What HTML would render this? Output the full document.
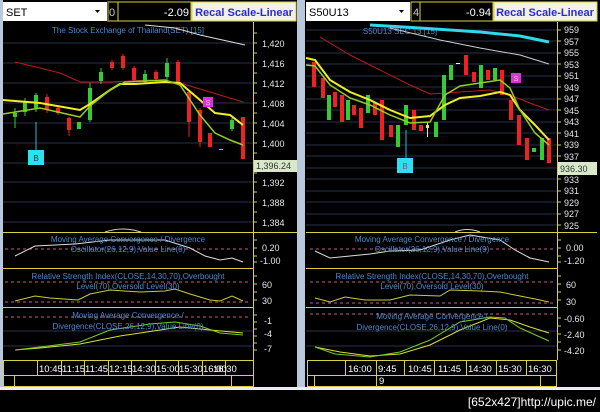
<!DOCTYPE html>
<html><head><meta charset="utf-8"><style>
html,body{margin:0;padding:0;background:#000;width:600px;height:412px;overflow:hidden}
svg{display:block}
text{font-family:"Liberation Sans",sans-serif}
</style></head><body>
<svg width="600" height="412" viewBox="0 0 600 412" xmlns="http://www.w3.org/2000/svg">
<rect width="600" height="412" fill="#000"/>
<rect x="297" y="0" width="8" height="390" fill="#b9c9dd"/>
<rect x="0" y="0" width="3" height="390" fill="#b9c9dd"/>
<rect x="0" y="387" width="600" height="3" fill="#e8eef4"/>

<g>
<rect x="3" y="2" width="104" height="19" fill="#fff"/>
<text x="6" y="16" font-size="11" fill="#000">SET</text>
<path d="M95 10 l5 0 l-2.5 3z" fill="#000"/>
<rect x="108" y="2" width="10" height="19" fill="#000" stroke="#d8d040"/>
<text x="109" y="16" font-size="11" fill="#ccc">0</text>
<rect x="118" y="2" width="73" height="19" fill="#000" stroke="#d8d040"/>
<text x="189" y="16" font-size="11" fill="#fff" text-anchor="end">-2.09</text>
<rect x="192" y="2" width="104" height="19" fill="#f2f2ea" stroke="#d8d040"/>
<text x="244" y="16" font-size="11" fill="#2a2ad0" font-weight="bold" text-anchor="middle">Recal Scale-Linear</text>

<g stroke="#2a2f4a" stroke-width="1">
<line x1="3" y1="43" x2="253" y2="43"/><line x1="3" y1="63" x2="253" y2="63"/><line x1="3" y1="83" x2="253" y2="83"/><line x1="3" y1="103" x2="253" y2="103"/><line x1="3" y1="123" x2="253" y2="123"/><line x1="3" y1="143" x2="253" y2="143"/><line x1="3" y1="163" x2="253" y2="163"/><line x1="3" y1="182" x2="253" y2="182"/><line x1="3" y1="202" x2="253" y2="202"/><line x1="3" y1="222" x2="253" y2="222"/>
</g>
<line x1="253.5" y1="22" x2="253.5" y2="360" stroke="#d8d040"/>
<g stroke="#d8d040">
<line x1="253" y1="33" x2="257" y2="33"/><line x1="253" y1="43" x2="257" y2="43"/><line x1="253" y1="53" x2="257" y2="53"/><line x1="253" y1="63" x2="257" y2="63"/><line x1="253" y1="73" x2="257" y2="73"/><line x1="253" y1="83" x2="257" y2="83"/><line x1="253" y1="93" x2="257" y2="93"/><line x1="253" y1="103" x2="257" y2="103"/><line x1="253" y1="113" x2="257" y2="113"/><line x1="253" y1="123" x2="257" y2="123"/><line x1="253" y1="133" x2="257" y2="133"/><line x1="253" y1="143" x2="257" y2="143"/><line x1="253" y1="153" x2="257" y2="153"/><line x1="253" y1="173" x2="257" y2="173"/><line x1="253" y1="182" x2="257" y2="182"/><line x1="253" y1="192" x2="257" y2="192"/><line x1="253" y1="202" x2="257" y2="202"/><line x1="253" y1="212" x2="257" y2="212"/><line x1="253" y1="222" x2="257" y2="222"/>
<line x1="253" y1="240" x2="257" y2="240"/><line x1="253" y1="248" x2="257" y2="248"/><line x1="253" y1="256" x2="257" y2="256"/><line x1="253" y1="262" x2="257" y2="262"/>
<line x1="253" y1="276" x2="257" y2="276"/><line x1="253" y1="284" x2="257" y2="284"/><line x1="253" y1="292" x2="257" y2="292"/><line x1="253" y1="300" x2="257" y2="300"/>
<line x1="253" y1="315" x2="257" y2="315"/><line x1="253" y1="322" x2="257" y2="322"/><line x1="253" y1="329" x2="257" y2="329"/><line x1="253" y1="336" x2="257" y2="336"/><line x1="253" y1="343" x2="257" y2="343"/><line x1="253" y1="350" x2="257" y2="350"/>
</g>
<g font-size="9" fill="#e6e6e6">
<text x="262" y="47">1,420</text><text x="262" y="67">1,416</text><text x="262" y="87">1,412</text><text x="262" y="107">1,408</text><text x="262" y="127">1,404</text><text x="262" y="147">1,400</text><text x="262" y="186">1,392</text><text x="262" y="206">1,388</text><text x="262" y="226">1,384</text>
</g>
<rect x="254" y="160" width="43" height="12" fill="#d8e8c8"/>
<text x="256" y="169" font-size="9" fill="#333">1,396.24</text>

<text x="128" y="33" font-size="8" fill="#4a8ad0" text-anchor="middle">The Stock Exchange of Thailand(SET) [15]</text>
<polyline points="145,25 175,28 200,35 245,45" fill="none" stroke="#ddd"/>
<polyline points="15,62 40,68 60,73 80,82 110,82 150,80 180,83 210,92 243,102" fill="none" stroke="#c01818"/>
<g stroke-width="1">
<line x1="15" y1="108" x2="15" y2="128" stroke="#3c3"/><rect x="13" y="113" width="4" height="4" fill="#3c3"/>
<line x1="25" y1="98" x2="25" y2="116" stroke="#3c3"/><rect x="23" y="102" width="4" height="10" fill="#3c3"/>
<line x1="36" y1="93" x2="36" y2="112" stroke="#3c3"/><rect x="34" y="95" width="4" height="13" fill="#3c3"/>
<line x1="47" y1="94" x2="47" y2="113" stroke="#e22"/><rect x="45" y="97" width="4" height="13" fill="#e22"/>
<line x1="58" y1="105" x2="58" y2="115" stroke="#e22"/><rect x="56" y="108" width="4" height="5" fill="#e22"/>
<line x1="69" y1="117" x2="69" y2="136" stroke="#e22"/><rect x="67" y="118" width="4" height="12" fill="#e22"/>
<rect x="77" y="122" width="4" height="7" fill="#3c3"/>
<line x1="90" y1="83" x2="90" y2="122" stroke="#3c3"/><rect x="88" y="88" width="4" height="32" fill="#3c3"/>
<line x1="101" y1="68" x2="101" y2="84" stroke="#3c3"/><rect x="99" y="72" width="4" height="9" fill="#3c3"/>
<line x1="112" y1="60" x2="112" y2="70" stroke="#e22"/><rect x="110" y="62" width="4" height="6" fill="#e22"/>
<line x1="123" y1="54" x2="123" y2="70" stroke="#e22"/><rect x="121" y="56" width="4" height="12" fill="#e22"/>
<line x1="134" y1="66" x2="134" y2="82" stroke="#e22"/><rect x="132" y="68" width="4" height="12" fill="#e22"/>
<line x1="145" y1="70" x2="145" y2="84" stroke="#3c3"/><rect x="143" y="74" width="4" height="8" fill="#3c3"/>
<line x1="156" y1="70" x2="156" y2="82" stroke="#e22"/><rect x="154" y="72" width="4" height="7" fill="#e22"/>
<line x1="167" y1="58" x2="167" y2="80" stroke="#3c3"/><rect x="165" y="63" width="4" height="14" fill="#3c3"/>
<line x1="178" y1="60" x2="178" y2="84" stroke="#e22"/><rect x="176" y="62" width="4" height="20" fill="#e22"/>
<line x1="189" y1="90" x2="189" y2="137" stroke="#e22"/><rect x="187" y="92" width="4" height="30" fill="#e22"/>
<line x1="200" y1="108" x2="200" y2="147" stroke="#e22"/><rect x="198" y="110" width="4" height="32" fill="#e22"/>
<rect x="208" y="133" width="4" height="14" fill="#e22"/>
<rect x="219" y="149" width="4" height="1" fill="#fa0"/>
<line x1="232" y1="118" x2="232" y2="131" stroke="#3c3"/><rect x="230" y="120" width="4" height="9" fill="#3c3"/>
<rect x="241" y="117" width="4" height="42" fill="#e22"/>
</g>
<polyline points="3,100 40,103 80,110 90,104 110,90 120,84 135,84 165,82 180,83 200,100 215,113 230,115 243,125" fill="none" stroke="#f0f020" stroke-width="2"/>
<polyline points="3,114 40,108 80,117 90,106 110,90 125,82 165,80 180,85 200,115 215,133 230,140 243,145" fill="none" stroke="#9c2" stroke-width="1.5"/>
<line x1="36" y1="122" x2="36" y2="150" stroke="#2bd"/>
<rect x="28" y="150" width="16" height="15" fill="#2de0f0"/>
<text x="36" y="161" font-size="8" fill="#333" text-anchor="middle">B</text>
<rect x="203" y="97" width="10" height="10" fill="#e030e0"/>
<text x="208" y="105" font-size="7" fill="#fcc" text-anchor="middle">S</text>

<g stroke="#d8d040"><line x1="3" y1="232.5" x2="297" y2="232.5"/><line x1="3" y1="268.5" x2="253" y2="268.5"/><line x1="3" y1="307.5" x2="253" y2="307.5"/></g>
<path d="M105 232 q18 -6 36 0" fill="none" stroke="#ccc"/>
<line x1="5" y1="249" x2="250" y2="249" stroke="#c06080" stroke-dasharray="3,3"/>
<polyline points="15,256 35,246 55,245 75,244 110,240 165,240 190,248 205,256 220,260 232,258 243,262" fill="none" stroke="#ddd"/>
<text x="128" y="242" font-size="8" fill="#4a8ad0" text-anchor="middle">Moving Average Convergence / Divergence</text>
<text x="128" y="252" font-size="8" fill="#4a8ad0" text-anchor="middle">Oscillator(26,12,9),Value Line(0)</text>
<text x="262" y="251" font-size="9" fill="#e6e6e6">0.20</text><text x="260" y="264" font-size="9" fill="#e6e6e6">-1.00</text>
<line x1="5" y1="282" x2="250" y2="282" stroke="#c06080" stroke-dasharray="3,3"/>
<line x1="5" y1="302" x2="250" y2="302" stroke="#c06080" stroke-dasharray="3,3"/>
<polyline points="15,301 35,296 50,298 78,300 90,294 110,290 140,292 165,291 175,289 190,294 210,300 220,301 232,296 243,301" fill="none" stroke="#cc3"/>
<text x="128" y="279" font-size="8" fill="#4a8ad0" text-anchor="middle">Relative Strength Index(CLOSE,14,30,70),Overbought</text>
<text x="128" y="289" font-size="8" fill="#4a8ad0" text-anchor="middle">Level(70),Oversold Level(30)</text>
<text x="262" y="288" font-size="9" fill="#e6e6e6">60</text><text x="262" y="304" font-size="9" fill="#e6e6e6">30</text>
<line x1="5" y1="317" x2="250" y2="317" stroke="#c06080" stroke-dasharray="3,3"/>
<g stroke="#2a2f4a"><line x1="3" y1="331" x2="253" y2="331"/><line x1="3" y1="346" x2="253" y2="346"/></g>
<polyline points="15,350 40,348 80,344 120,336 160,330 180,327 210,330 243,333" fill="none" stroke="#dd3"/>
<polyline points="15,350 40,347 80,342 110,330 150,324 175,322 200,326 220,333 243,335" fill="none" stroke="#7c2"/>
<text x="128" y="318" font-size="8" fill="#4a8ad0" text-anchor="middle">Moving Average Convergence /</text>
<text x="128" y="329" font-size="8" fill="#4a8ad0" text-anchor="middle">Divergence(CLOSE,26,12,9),Value Line(0)</text>
<text x="264" y="324" font-size="9" fill="#e6e6e6">-1</text><text x="264" y="337" font-size="9" fill="#e6e6e6">-4</text><text x="264" y="352" font-size="9" fill="#e6e6e6">-7</text>
<rect x="3.5" y="360.5" width="250" height="15" fill="none" stroke="#d8d040"/>
<rect x="3.5" y="375.5" width="250" height="11" fill="none" stroke="#d8d040"/>
<line x1="14.5" y1="375" x2="14.5" y2="387" stroke="#d8d040"/>
<line x1="231.5" y1="375" x2="231.5" y2="387" stroke="#d8d040"/>
<g stroke="#d8d040"><line x1="37.5" y1="360" x2="37.5" y2="375"/><line x1="61.5" y1="360" x2="61.5" y2="375"/><line x1="84.5" y1="360" x2="84.5" y2="375"/><line x1="108.5" y1="360" x2="108.5" y2="375"/><line x1="131.5" y1="360" x2="131.5" y2="375"/><line x1="155.5" y1="360" x2="155.5" y2="375"/><line x1="178.5" y1="360" x2="178.5" y2="375"/><line x1="202.5" y1="360" x2="202.5" y2="375"/><line x1="225.5" y1="360" x2="225.5" y2="375"/></g>
<g font-size="9.5" fill="#fff"><text x="39" y="372">10:45</text><text x="62" y="372">11:15</text><text x="85" y="372">11:45</text><text x="109" y="372">12:15</text><text x="132" y="372">14:30</text><text x="156" y="372">15:00</text><text x="179" y="372">15:30</text><text x="203" y="372">16:00</text><text x="213" y="372">16:30</text></g>
</g>

<g>
<rect x="306" y="2" width="104" height="19" fill="#fff"/>
<text x="309" y="16" font-size="11" fill="#000">S50U13</text>
<path d="M399 10 l5 0 l-2.5 3z" fill="#000"/>
<rect x="411" y="2" width="9" height="19" fill="#000" stroke="#d8d040"/>
<text x="413" y="16" font-size="11" fill="#ccc">4</text>
<rect x="420" y="2" width="73" height="19" fill="#000" stroke="#d8d040"/>
<text x="491" y="16" font-size="11" fill="#fff" text-anchor="end">-0.94</text>
<rect x="494" y="2" width="103" height="19" fill="#f2f2ea" stroke="#d8d040"/>
<text x="545" y="16" font-size="11" fill="#2a2ad0" font-weight="bold" text-anchor="middle">Recal Scale-Linear</text>

<g stroke="#2a2f4a">
<line x1="306" y1="30" x2="557" y2="30"/><line x1="306" y1="41" x2="557" y2="41"/><line x1="306" y1="53" x2="557" y2="53"/><line x1="306" y1="64" x2="557" y2="64"/><line x1="306" y1="76" x2="557" y2="76"/><line x1="306" y1="87" x2="557" y2="87"/><line x1="306" y1="99" x2="557" y2="99"/><line x1="306" y1="110" x2="557" y2="110"/><line x1="306" y1="122" x2="557" y2="122"/><line x1="306" y1="133" x2="557" y2="133"/><line x1="306" y1="145" x2="557" y2="145"/><line x1="306" y1="156" x2="557" y2="156"/><line x1="306" y1="168" x2="557" y2="168"/><line x1="306" y1="179" x2="557" y2="179"/><line x1="306" y1="191" x2="557" y2="191"/><line x1="306" y1="202" x2="557" y2="202"/><line x1="306" y1="214" x2="557" y2="214"/><line x1="306" y1="225" x2="557" y2="225"/>
</g>
<line x1="557.5" y1="22" x2="557.5" y2="360" stroke="#d8d040"/>
<g stroke="#d8d040">
<line x1="557" y1="30" x2="561" y2="30"/><line x1="557" y1="41" x2="561" y2="41"/><line x1="557" y1="53" x2="561" y2="53"/><line x1="557" y1="64" x2="561" y2="64"/><line x1="557" y1="76" x2="561" y2="76"/><line x1="557" y1="87" x2="561" y2="87"/><line x1="557" y1="99" x2="561" y2="99"/><line x1="557" y1="110" x2="561" y2="110"/><line x1="557" y1="122" x2="561" y2="122"/><line x1="557" y1="133" x2="561" y2="133"/><line x1="557" y1="145" x2="561" y2="145"/><line x1="557" y1="156" x2="561" y2="156"/><line x1="557" y1="179" x2="561" y2="179"/><line x1="557" y1="191" x2="561" y2="191"/><line x1="557" y1="202" x2="561" y2="202"/><line x1="557" y1="214" x2="561" y2="214"/><line x1="557" y1="225" x2="561" y2="225"/>
<line x1="557" y1="240" x2="561" y2="240"/><line x1="557" y1="248" x2="561" y2="248"/><line x1="557" y1="256" x2="561" y2="256"/><line x1="557" y1="262" x2="561" y2="262"/>
<line x1="557" y1="276" x2="561" y2="276"/><line x1="557" y1="284" x2="561" y2="284"/><line x1="557" y1="292" x2="561" y2="292"/><line x1="557" y1="300" x2="561" y2="300"/>
<line x1="557" y1="318" x2="561" y2="318"/><line x1="557" y1="326" x2="561" y2="326"/><line x1="557" y1="334" x2="561" y2="334"/><line x1="557" y1="342" x2="561" y2="342"/><line x1="557" y1="350" x2="561" y2="350"/>
</g>
<g font-size="9" fill="#e6e6e6">
<text x="564" y="33">959</text><text x="564" y="45">957</text><text x="564" y="56">955</text><text x="564" y="68">953</text><text x="564" y="79">951</text><text x="564" y="91">949</text><text x="564" y="102">947</text><text x="564" y="114">945</text><text x="564" y="125">943</text><text x="564" y="137">941</text><text x="564" y="148">939</text><text x="564" y="160">937</text><text x="564" y="183">933</text><text x="564" y="194">931</text><text x="564" y="206">929</text><text x="564" y="217">927</text><text x="564" y="229">925</text>
</g>
<rect x="558" y="162" width="39" height="13" fill="#d8e8c8"/>
<text x="560" y="172" font-size="9" fill="#333">936.30</text>

<text x="400" y="34" font-size="8" fill="#4a8ad0" text-anchor="middle">S50U13 SEC 13 [15]</text>
<polyline points="370,25 420,28 480,32 520,36 549,42" fill="none" stroke="#30d8e8" stroke-width="3"/>
<polyline points="390,28 440,40 480,48 520,55 549,64" fill="none" stroke="#ccc"/>
<polyline points="320,37 350,55 380,70 410,85 430,94 460,92 490,90 510,95 530,103 549,110" fill="none" stroke="#c01818"/>
<g>
<rect x="312" y="62" width="4" height="25" fill="#e22"/>
<rect x="321" y="78" width="4" height="20" fill="#e22"/>
<rect x="327" y="95" width="4" height="25" fill="#3c3"/>
<rect x="333" y="92" width="4" height="15" fill="#e22"/>
<rect x="340" y="95" width="4" height="27" fill="#e22"/>
<rect x="346" y="100" width="4" height="20" fill="#3c3"/>
<rect x="352" y="105" width="4" height="10" fill="#e22"/>
<rect x="359" y="108" width="4" height="20" fill="#e22"/>
<rect x="366" y="95" width="4" height="18" fill="#3c3"/>
<rect x="373" y="103" width="4" height="12" fill="#e22"/>
<rect x="380" y="100" width="4" height="40" fill="#e22"/>
<rect x="389" y="125" width="4" height="12" fill="#e22"/>
<rect x="396" y="125" width="4" height="22" fill="#3c3"/>
<rect x="404" y="105" width="4" height="20" fill="#3c3"/>
<rect x="412" y="110" width="4" height="20" fill="#e22"/>
<rect x="419" y="125" width="4" height="6" fill="#e22"/>
<rect x="426" y="125" width="3" height="3" fill="#fd6"/>
<line x1="427.5" y1="122" x2="427.5" y2="137" stroke="#fd6"/>
<rect x="434" y="122" width="4" height="15" fill="#3c3"/>
<rect x="442" y="75" width="4" height="45" fill="#3c3"/>
<rect x="449" y="65" width="4" height="15" fill="#3c3"/>
<rect x="456" y="63" width="4" height="1" fill="#eee"/>
<rect x="464" y="55" width="4" height="20" fill="#e22"/>
<rect x="472" y="72" width="4" height="10" fill="#e22"/>
<rect x="479" y="65" width="4" height="23" fill="#3c3"/>
<rect x="486" y="70" width="4" height="10" fill="#e22"/>
<rect x="493" y="68" width="4" height="12" fill="#3c3"/>
<rect x="500" y="70" width="4" height="25" fill="#e22"/>
<rect x="509" y="100" width="4" height="20" fill="#e22"/>
<rect x="517" y="115" width="4" height="30" fill="#e22"/>
<rect x="525" y="138" width="4" height="22" fill="#e22"/>
<rect x="532" y="148" width="4" height="4" fill="#3c3"/>
<rect x="540" y="138" width="4" height="22" fill="#3c3"/>
<rect x="547" y="138" width="4" height="25" fill="#e22"/>
</g>
<polyline points="306,58 315,60 330,80 350,92 370,100 390,110 410,118 430,116 445,105 460,98 480,96 500,92 510,95 520,110 535,125 549,140" fill="none" stroke="#f0f020" stroke-width="2"/>
<polyline points="306,65 315,66 330,85 350,98 370,105 390,115 410,123 430,122 445,95 460,86 480,83 500,80 510,88 520,110 535,133 549,145" fill="none" stroke="#9c2" stroke-width="1.5"/>
<line x1="406" y1="130" x2="406" y2="158" stroke="#2bd"/>
<rect x="397" y="158" width="16" height="15" fill="#2de0f0"/>
<text x="405" y="169" font-size="8" fill="#a04080" text-anchor="middle">B</text>
<rect x="511" y="73" width="10" height="10" fill="#e030e0"/>
<text x="516" y="81" font-size="7" fill="#fcc" text-anchor="middle">S</text>

<g stroke="#d8d040"><line x1="306" y1="232.5" x2="597" y2="232.5"/><line x1="306" y1="268.5" x2="557" y2="268.5"/><line x1="306" y1="307.5" x2="557" y2="307.5"/></g>
<path d="M455 232 q12 -5 25 0" fill="none" stroke="#ccc"/>
<line x1="310" y1="249" x2="555" y2="249" stroke="#c06080" stroke-dasharray="3,3"/>
<polyline points="315,251 330,258 350,256 370,254 390,251 420,250 450,240 470,235 500,240 515,250 530,258 549,262" fill="none" stroke="#ddd"/>
<text x="432" y="242" font-size="8" fill="#4a8ad0" text-anchor="middle">Moving Average Convergence / Divergence</text>
<text x="432" y="252" font-size="8" fill="#4a8ad0" text-anchor="middle">Oscillator(26,12,9),Value Line(9)</text>
<text x="566" y="251" font-size="9" fill="#e6e6e6">0.00</text><text x="564" y="264" font-size="9" fill="#e6e6e6">-1.20</text>
<line x1="310" y1="282" x2="555" y2="282" stroke="#c06080" stroke-dasharray="3,3"/>
<line x1="310" y1="303" x2="555" y2="303" stroke="#c06080" stroke-dasharray="3,3"/>
<polyline points="315,298 330,302 345,297 365,300 390,300 410,295 440,296 450,290 480,291 500,292 520,296 540,300 549,302" fill="none" stroke="#cc3"/>
<text x="432" y="279" font-size="8" fill="#4a8ad0" text-anchor="middle">Relative Strength Index(CLOSE,14,30,70),Overbought</text>
<text x="432" y="289" font-size="8" fill="#4a8ad0" text-anchor="middle">Level(70),Oversold Level(30)</text>
<text x="566" y="288" font-size="9" fill="#e6e6e6">60</text><text x="566" y="305" font-size="9" fill="#e6e6e6">30</text>
<line x1="310" y1="314" x2="555" y2="314" stroke="#c06080" stroke-dasharray="3,3"/>
<g stroke="#2a2f4a"><line x1="306" y1="331" x2="557" y2="331"/><line x1="306" y1="346" x2="557" y2="346"/></g>
<polyline points="315,347 340,352 370,356 400,354 430,345 460,330 490,318 510,320 530,327 549,333" fill="none" stroke="#dd3"/>
<polyline points="315,347 335,354 370,357 400,352 430,340 460,322 490,317 505,318 520,328 540,337 549,341" fill="none" stroke="#7c2"/>
<text x="432" y="319" font-size="8" fill="#4a8ad0" text-anchor="middle">Moving Average Convergence /</text>
<text x="432" y="330" font-size="8" fill="#4a8ad0" text-anchor="middle">Divergence(CLOSE,26,12,9),Value Line(0)</text>
<text x="564" y="322" font-size="9" fill="#e6e6e6">-0.60</text><text x="564" y="338" font-size="9" fill="#e6e6e6">-2.40</text><text x="564" y="354" font-size="9" fill="#e6e6e6">-4.20</text>
<rect x="307.5" y="360.5" width="249" height="15" fill="none" stroke="#d8d040"/>
<rect x="307.5" y="375.5" width="249" height="11" fill="none" stroke="#d8d040"/>
<line x1="314.5" y1="375" x2="314.5" y2="387" stroke="#d8d040"/>
<line x1="540.5" y1="375" x2="540.5" y2="387" stroke="#d8d040"/>
<g stroke="#d8d040"><line x1="345.5" y1="360" x2="345.5" y2="375"/><line x1="376.5" y1="360" x2="376.5" y2="387"/><line x1="404.5" y1="360" x2="404.5" y2="375"/><line x1="434.5" y1="360" x2="434.5" y2="375"/><line x1="466.5" y1="360" x2="466.5" y2="375"/><line x1="496.5" y1="360" x2="496.5" y2="375"/><line x1="526.5" y1="360" x2="526.5" y2="375"/></g>
<g font-size="9.5" fill="#fff"><text x="348" y="372">16:00</text><text x="378" y="372">9:45</text><text x="408" y="372">10:45</text><text x="438" y="372">11:45</text><text x="468" y="372">14:30</text><text x="498" y="372">15:30</text><text x="528" y="372">16:30</text><text x="379" y="384">9</text></g>
</g>
<text x="596" y="406" font-size="12" fill="#fff" text-anchor="end" font-family="Liberation Mono, monospace">[652x427]http://upic.me/</text>
</svg>
</body></html>
